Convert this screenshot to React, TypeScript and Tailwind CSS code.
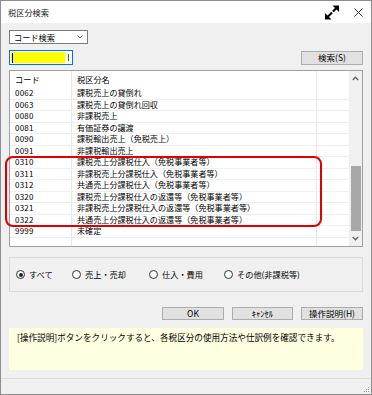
const rows: [string, string][] = [
  ["0062", "課税売上の貸倒れ"],
  ["0063", "課税売上の貸倒れ回収"],
  ["0080", "非課税売上"],
  ["0081", "有価証券の譲渡"],
  ["0090", "課税輸出売上（免税売上）"],
  ["0091", "非課税輸出売上"],
  ["0310", "課税売上分課税仕入（免税事業者等）"],
  ["0311", "非課税売上分課税仕入（免税事業者等）"],
  ["0312", "共通売上分課税仕入（免税事業者等）"],
  ["0320", "課税売上分課税仕入の返還等（免税事業者等）"],
  ["0321", "非課税売上分課税仕入の返還等（免税事業者等）"],
  ["0322", "共通売上分課税仕入の返還等（免税事業者等）"],
  ["9999", "未確定"],
];

const radios = [
  { label: "すべて", w: "w-[56px]", on: true },
  { label: "売上・売却", w: "w-[77px]", on: false },
  { label: "仕入・費用", w: "w-[75px]", on: false },
  { label: "その他(非課税等)", w: "w-auto", on: false },
];

const Button = ({ label, w }: { label: string; w: string }) => (
  <button
    className={`${w} h-full bg-[#e1e1e1] border border-[#adadad] text-[8.5px] leading-none text-black flex items-center justify-center`}
  >
    {label}
  </button>
);

const App = () => {
  return (
    <div className="w-[372px] h-[395px] border border-[#8e8e8e] bg-[#f0f0f0] flex flex-col relative overflow-hidden font-[family-name:'Noto_Sans_CJK_JP','Liberation_Sans',sans-serif] text-black">
      {/* title bar */}
      <div className="h-[22px] bg-white flex items-center justify-between pl-[7px] pr-[8px] shrink-0">
        <span className="text-[8.2px] leading-none text-[#222]">税区分検索</span>
        <div className="flex items-center gap-[14px]">
          <svg width="16" height="15" viewBox="0 0 16 16">
            <line x1="3" y1="13" x2="8" y2="8" stroke="black" strokeWidth="2.2" />
            <polygon points="0.5,15.5 0.5,8.5 7.5,15.5" fill="black" />
            <line x1="9" y1="7" x2="13" y2="3" stroke="black" strokeWidth="2.2" />
            <polygon points="15.5,0.5 15.5,7.5 8.5,0.5" fill="black" />
          </svg>
          <svg width="9" height="9" viewBox="0 0 9 9">
            <path d="M0.5 0.5 L8.5 8.5 M8.5 0.5 L0.5 8.5" stroke="#333" strokeWidth="1" />
          </svg>
        </div>
      </div>

      <div className="flex flex-col px-[8px]">
        {/* combobox */}
        <div className="mt-[7px] w-[79px] h-[14px] bg-white border border-[#7a7a7a] flex items-center justify-between pl-[4px] pr-[4px]">
          <span className="text-[8.2px] leading-none">コード検索</span>
          <svg width="6" height="4" viewBox="0 0 6 4">
            <path d="M0.5 0.5 L3 3 L5.5 0.5" stroke="#444" strokeWidth="0.9" fill="none" />
          </svg>
        </div>

        {/* input row */}
        <div className="mt-[6px] h-[15px] flex items-center justify-between">
          <div className="w-[64px] h-[15px] border border-[#0078d7] bg-white flex p-[1px]">
            <div className="flex-1 bg-[#ffff00] flex items-center pl-[1px]">
              <div className="w-[1px] h-[10px] bg-black" />
            </div>
            <div className="w-[6px] flex items-center justify-center">
              <div className="w-[1px] h-[7px] bg-[#555]" />
            </div>
          </div>
          <div className="w-[62px] h-[14px]">
            <Button label="検索(S)" w="w-full" />
          </div>
        </div>

        {/* list */}
        <div className="mt-[5px] h-[177px] bg-white border border-[#a0a0a0] flex">
          <div className="flex-1 flex flex-col">
            <div className="h-[17px] flex items-center text-[8.2px] leading-none">
              <div className="w-[62px] h-full border-r border-[#e8e8e8] flex items-center pl-[5px]">コード</div>
              <div className="w-[245px] h-full border-r border-[#e8e8e8] flex items-center pl-[5px]">税区分名</div>
              <div className="flex-1" />
            </div>
            {rows.map(([code, name]) => (
              <div key={code} className="h-[11.5px] flex border-b border-[#efefef] text-[8px] leading-none">
                <div className="w-[62px] border-r border-[#e8e8e8] flex items-center pl-[5px] tracking-[0.2px]">{code}</div>
                <div className="w-[245px] border-r border-[#e8e8e8] flex items-center pl-[5px] text-[8.1px] whitespace-nowrap">{name}</div>
                <div className="flex-1" />
              </div>
            ))}
            <div className="flex-1 flex">
              <div className="w-[62px] border-r border-[#e8e8e8]" />
              <div className="w-[245px] border-r border-[#e8e8e8]" />
            </div>
          </div>
          {/* scrollbar */}
          <div className="w-[13px] bg-[#f0f0f0] flex flex-col">
            <div className="h-[17px] flex items-center justify-center">
              <svg width="7" height="5" viewBox="0 0 7 5">
                <path d="M0.8 4 L3.5 1.2 L6.2 4" stroke="#606060" strokeWidth="1.3" fill="none" />
              </svg>
            </div>
            <div className="flex-1 px-[1.5px]">
              <div className="mt-[80px] h-[65px] bg-[#a8a8a8]" />
            </div>
            <div className="h-[17px] flex items-center justify-center">
              <svg width="7" height="5" viewBox="0 0 7 5">
                <path d="M0.8 1 L3.5 3.8 L6.2 1" stroke="#606060" strokeWidth="1.3" fill="none" />
              </svg>
            </div>
          </div>
        </div>

        {/* radio group */}
        <div className="mt-[10px] h-[35px] border border-[#dcdcdc] flex items-center pl-[6px]">
          {radios.map((r) => (
            <div key={r.label} className={`${r.w} flex items-center gap-[4px]`}>
              <div className="w-[9px] h-[9px] rounded-full border border-[#333] bg-white flex items-center justify-center">
                {r.on && <div className="w-[4px] h-[4px] rounded-full bg-[#222]" />}
              </div>
              <span className="text-[8.2px] leading-none">{r.label}</span>
            </div>
          ))}
        </div>

        {/* buttons */}
        <div className="mt-[15px] h-[13px] flex justify-end gap-[8px]">
          <Button label="OK" w="w-[62px]" />
          <Button label="ｷｬﾝｾﾙ" w="w-[61px]" />
          <Button label="操作説明(H)" w="w-[62px]" />
        </div>

        {/* info */}
        <div className="mt-[8px] h-[42px] bg-[#ffffe1] pl-[8px] pt-[5px]">
          <p className="text-[8.6px] leading-none whitespace-nowrap">
            [操作説明]ボタンをクリックすると、各税区分の使用方法や仕訳例を確認できます。
          </p>
        </div>
      </div>

      {/* status bar */}
      <div className="mt-auto h-[16px] border-t border-[#dcdcdc] flex items-end justify-end pr-[1px] pb-[1px]">
        <svg width="6" height="6" viewBox="0 0 6 6">
          <rect x="4" y="0" width="1" height="1" fill="#999" />
          <rect x="2" y="2" width="1" height="1" fill="#999" />
          <rect x="4" y="2" width="1" height="1" fill="#999" />
          <rect x="0" y="4" width="1" height="1" fill="#999" />
          <rect x="2" y="4" width="1" height="1" fill="#999" />
          <rect x="4" y="4" width="1" height="1" fill="#999" />
        </svg>
      </div>

      {/* red annotation */}
      <div className="absolute left-[4px] top-[155px] w-[317px] h-[71px] border-[2.5px] border-[#e00000] rounded-[8px] pointer-events-none" />
    </div>
  );
};

export default App;
